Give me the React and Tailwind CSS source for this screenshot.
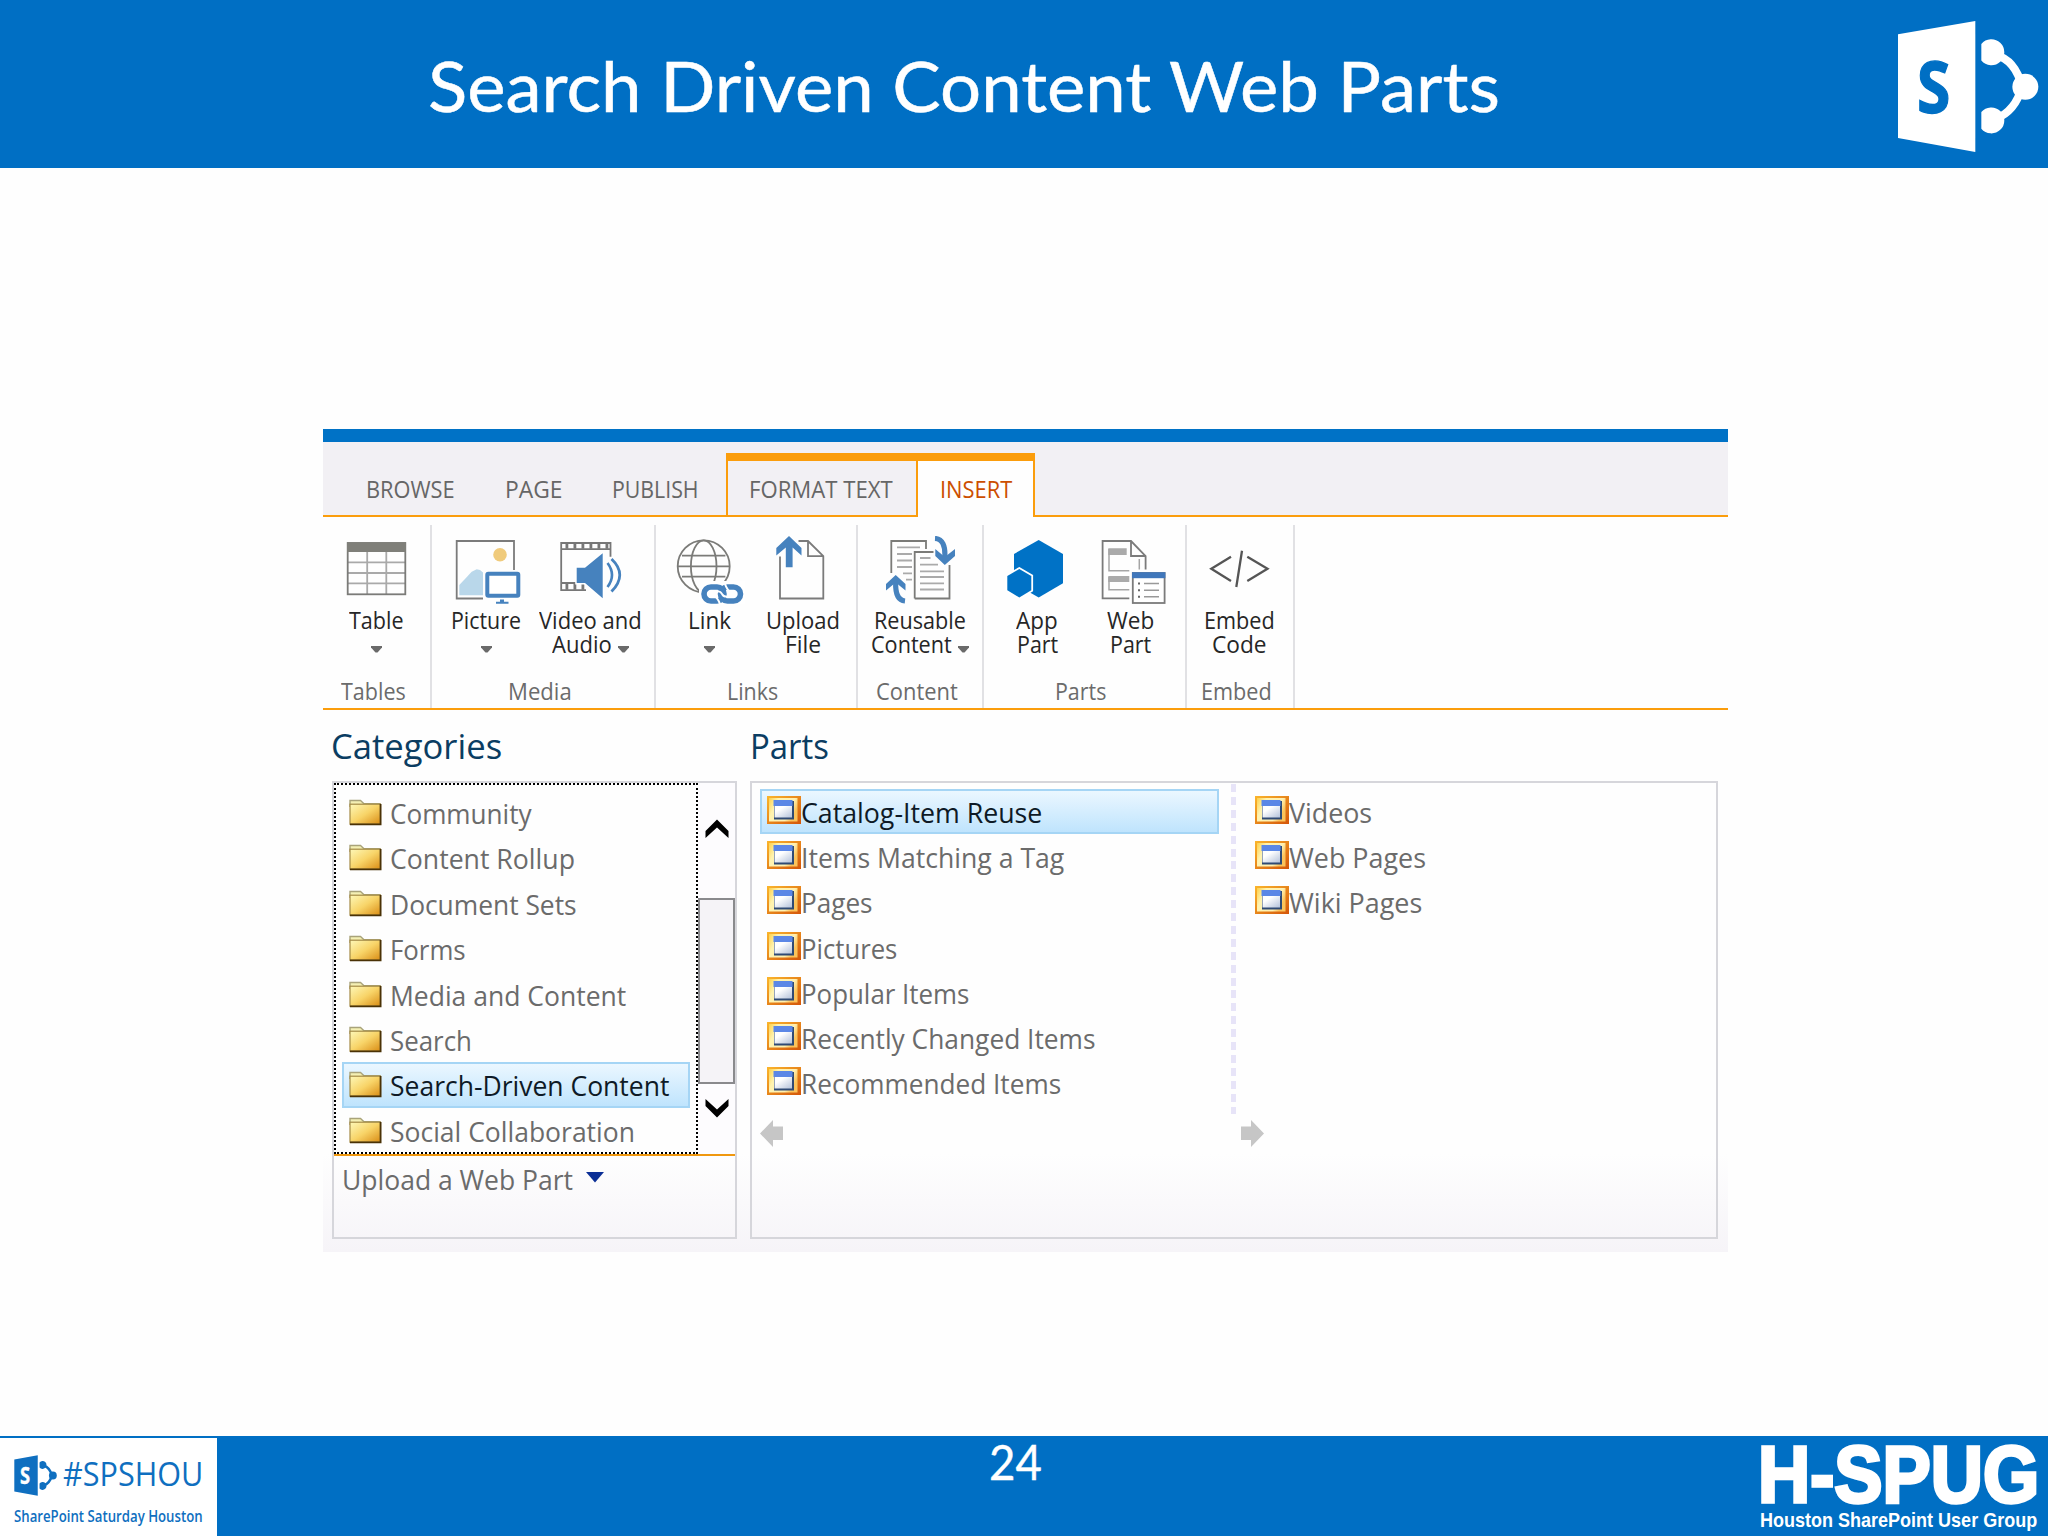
import { useLayoutEffect, useRef, useState } from "react";

// Single line of text squeezed (or stretched) to a fixed width
function Fit({ w, className = "", children }) {
  const ref = useRef(null);
  const [scale, setScale] = useState(1);

  useLayoutEffect(() => {
    setScale(w / ref.current.offsetWidth);
  }, [w, children]);

  return (
    <span className={`block shrink-0 whitespace-nowrap ${className}`} style={{ width: w }}>
      <span ref={ref} className="inline-block origin-left" style={{ transform: `scaleX(${scale})` }}>
        {children}
      </span>
    </span>
  );
}

function SharePointLogo({ className, color, letter }) {
  return (
    <svg viewBox="50 60 426 400" preserveAspectRatio="none" className={className}>
      <polygon points="53,103 285,63 285,457 53,415" fill={color} />
      <text
        x="110"
        y="340"
        fontFamily="Open Sans, sans-serif"
        fontWeight="700"
        fontSize="218"
        textLength="100"
        lengthAdjust="spacingAndGlyphs"
        fill={letter}
        stroke={letter}
        strokeWidth="4"
      >
        S
      </text>
      <path d="M345 165 Q405 180 425 261 Q405 335 345 358" fill="none" stroke={color} strokeWidth="24" />
      <path d="M303 132 A39 39 0 1 1 303 182 Z" fill={color} />
      <path d="M303 337 A39 39 0 1 1 303 387 Z" fill={color} />
      <circle cx="435" cy="261" r="39" fill={color} />
    </svg>
  );
}

function TableIcon() {
  return (
    <svg width="72" height="68" viewBox="0 0 72 68" fill="none">
      <path d="M26.2 16V58M45.3 16V58M7 26.3H64M7 37H64M7 47.3H64" stroke="#a9a9a9" strokeWidth="1.8" />
      <rect x="6.7" y="7" width="57.6" height="51.3" stroke="#7b7b78" strokeWidth="1.8" />
      <rect x="6" y="6.3" width="59" height="9.7" fill="#7f7f79" />
    </svg>
  );
}

function PictureIcon() {
  return (
    <svg width="72" height="68" viewBox="0 0 72 68" fill="none">
      <path d="M64 34V5H6.7V62.5H33" stroke="#7b7b7b" strokeWidth="1.8" />
      <circle cx="50" cy="18.7" r="6.8" fill="#f0cb7c" />
      <path d="M9.3 59.3V49L21.7 35.7L26.7 33.3L30 34L33 36.5V59.3Z" fill="#b9d7ea" />
      <rect x="37.3" y="37.7" width="31" height="22" rx="1" fill="#fff" stroke="#4682be" strokeWidth="4" />
      <path d="M50 63.5H54V65.7H58.5V67.8H46V65.7H50Z" fill="#4682be" />
    </svg>
  );
}

function VideoIcon() {
  return (
    <svg width="72" height="68" viewBox="0 0 72 68" fill="none">
      <path d="M56.5 20.7V7H7.2V54.2H32M7.2 13.2H56.5M7.2 47H24" stroke="#777" strokeWidth="1.8" />
      <path d="M11.5 10.2H56" stroke="#777" strokeWidth="5" strokeDasharray="2.8 5.2" />
      <path d="M11.5 50.7H32" stroke="#777" strokeWidth="6" strokeDasharray="2.8 5.2" />
      <path d="M22.7 31.7H31L48.7 17.3V62.3L31 47H22.7Z" fill="#4682be" stroke="#fff" strokeWidth="3" paintOrder="stroke" />
      <path d="M53.5 27Q62.5 39 53.5 51" stroke="#4682be" strokeWidth="2.6" />
      <path d="M57.5 23Q74 38.5 57.5 55.5" stroke="#4682be" strokeWidth="2.8" />
    </svg>
  );
}

function LinkIcon() {
  return (
    <svg width="72" height="68" viewBox="0 0 72 68" fill="none">
      <g stroke="#7b7b78" strokeWidth="1.8">
        <circle cx="30.7" cy="30.3" r="26" />
        <ellipse cx="30.7" cy="30.3" rx="12.8" ry="26" />
        <path d="M4.7 30.3H56.7M9 19.7H52.4M9 40.7H52.4" />
      </g>
      <path d="M26 50Q28 45 34 45H72V68H26Z" fill="#fff" />
      <rect x="31" y="51" width="20" height="14" rx="7" stroke="#4682be" strokeWidth="5.6" />
      <rect x="47.5" y="51" width="20" height="14" rx="7" stroke="#4682be" strokeWidth="5.6" />
      <path d="M52 48Q54 54 59 58M39.5 58Q45 62 47 68" stroke="#fff" strokeWidth="2" />
      <path d="M42 56Q47 54 49 58T57 60" stroke="#fff" strokeWidth="1.8" />
    </svg>
  );
}

function UploadIcon() {
  return (
    <svg width="72" height="68" viewBox="0 0 72 68" fill="none">
      <path d="M31.5 5H41L56.3 20.2V62.5H13V20.5M41 5V20.2H56.3" stroke="#7b7b7b" strokeWidth="1.8" />
      <path d="M22 0L34.5 12V19.5L25.6 11.5V31.3H18.8V11.5L9.3 19.5V12Z" fill="#4682be" />
    </svg>
  );
}

function ReusableIcon() {
  return (
    <svg width="72" height="68" viewBox="0 0 72 68" fill="none">
      <path d="M7.3 37V5H42V13M30.7 62.5V16H49.5M30.7 62.5H65.5V29" stroke="#7b7b78" strokeWidth="1.8" />
      <path
        d="M13 11.3H36M13 18H28M13 24.5H28M13 31H28M19 37.3H28M22 43.6H28M36 22H46.5M36 28.7H54M36 35.3H60M36 41H60M36 47.3H60M36 53.5H60"
        stroke="#aaa"
        strokeWidth="1.8"
      />
      <path d="M51 2.5Q62 3 60.8 22" stroke="#4682be" strokeWidth="5.2" />
      <path d="M60.8 29L51.3 20V13L60.8 21L71 13V20Z" fill="#4682be" />
      <path d="M21 65Q11 64 11.7 46" stroke="#4682be" strokeWidth="5.2" />
      <path d="M11.7 39L21.5 48V54.5L11.7 46.5L2 54.5V48Z" fill="#4682be" />
    </svg>
  );
}

function AppPartIcon() {
  return (
    <svg width="72" height="68" viewBox="0 0 72 68">
      <polygon points="37.7,4 62,18 62,47.3 37.7,61.5 13,47.3 13,18" fill="#0072c6" />
      <polygon
        points="18.3,33 30.3,40 30.3,54.3 18.3,61.4 6.3,54.3 6.3,40"
        fill="#0072c6"
        stroke="#fff"
        strokeWidth="3.6"
        paintOrder="stroke"
      />
    </svg>
  );
}

function WebPartIcon() {
  return (
    <svg width="72" height="68" viewBox="0 0 72 68" fill="none">
      <path d="M34.3 62.4H7.6V5H36L50.6 20V33.5M36 5V20H50.6" stroke="#7b7b7b" strokeWidth="1.8" />
      <path d="M13.3 12.3H31.7V19H13.3ZM13.3 40H34.3V46H13.3Z" fill="#aaa" />
      <path d="M34.3 34.7H14V13M34.3 53.8H14V41M44.3 23V33.5" stroke="#a5a5a5" strokeWidth="1.5" />
      <rect x="37.8" y="37" width="31.8" height="30" fill="#fff" stroke="#7b7b7b" strokeWidth="1.8" />
      <rect x="37" y="36.2" width="33.4" height="6" fill="#4077bb" />
      <path d="M49 47.5H64M49 54.3H64M49 60.7H64" stroke="#999" strokeWidth="1.5" />
      <path d="M43 47.5H45M43 54.3H45M43 60.7H45" stroke="#666" strokeWidth="2" />
    </svg>
  );
}

function EmbedIcon() {
  return (
    <svg width="72" height="68" viewBox="0 0 72 68" fill="none" stroke="#555" strokeWidth="2.3">
      <path d="M28 20.7L8.3 32.7L28 45M44.3 20.7L64.5 32.7L44.3 45M39 14.7L33.3 51" />
    </svg>
  );
}

function DropArrow({ className = "" }) {
  return (
    <svg width="11" height="7" viewBox="0 0 11 7" className={`shrink-0 ${className}`}>
      <path d="M0 0H11V1.5L6.5 6.5H4.5L0 1.5Z" fill="#6a6a6a" />
    </svg>
  );
}

function FolderIcon() {
  return (
    <svg width="33" height="27" viewBox="0 0 33 27" className="shrink-0">
      <defs>
        <linearGradient id="folder" x1="0" y1="0" x2="1" y2="1">
          <stop offset="0" stopColor="#fdf8b8" />
          <stop offset="0.5" stopColor="#f8d468" />
          <stop offset="1" stopColor="#d98c14" />
        </linearGradient>
      </defs>
      <path d="M1 8V1.5H11.5L15 4.7H31V8" fill="#f5f0b4" stroke="#a9a37a" strokeWidth="1.4" />
      <rect x="1" y="5.2" width="30.4" height="20" fill="url(#folder)" stroke="#a48a45" strokeWidth="1.2" />
      <path d="M1 25.3H31.6V5" fill="none" stroke="#4a3206" strokeWidth="1.8" />
    </svg>
  );
}

function PartIcon() {
  return (
    <svg width="34" height="28" viewBox="0 0 34 28" className="shrink-0">
      <defs>
        <linearGradient id="frame" x1="0" y1="0" x2="1" y2="1">
          <stop offset="0" stopColor="#fbb62c" />
          <stop offset="1" stopColor="#d4560a" />
        </linearGradient>
        <linearGradient id="inner" x1="0" y1="0" x2="1" y2="0.4">
          <stop offset="0" stopColor="#fdd04a" />
          <stop offset="0.3" stopColor="#fff3b0" />
          <stop offset="0.8" stopColor="#fff0b0" />
          <stop offset="1" stopColor="#fbc35a" />
        </linearGradient>
        <linearGradient id="pane" x1="0" y1="0" x2="1" y2="1">
          <stop offset="0.3" stopColor="#ffffff" />
          <stop offset="1" stopColor="#b4c2da" />
        </linearGradient>
      </defs>
      <rect width="34" height="28" fill="url(#frame)" />
      <rect x="2" y="2" width="28.5" height="23.5" fill="url(#inner)" />
      <rect x="7" y="5" width="20" height="18.5" fill="#2f4a74" />
      <rect x="6.5" y="4" width="19" height="6" fill="#5b87e6" />
      <rect x="7.5" y="10" width="17.5" height="11.5" fill="url(#pane)" />
    </svg>
  );
}

// lines: [text, width] pairs, arrow: "below" or "inline" with the last line
function RibbonButton({ className, icon, lines, arrow }) {
  return (
    <div className={`flex flex-col items-center ${className}`}>
      {icon}
      <div className="mt-[5px] flex flex-col items-center text-[23.5px] leading-[23.5px] text-[#262626]">
        {lines.map(([text, w], i) => (
          <div key={i} className="flex">
            <Fit w={w}>{text}</Fit>
            {arrow === "inline" && i === lines.length - 1 && <DropArrow className="mt-[13px] ml-[6px]" />}
          </div>
        ))}
      </div>
      {arrow === "below" && <DropArrow className="mt-[13px]" />}
    </div>
  );
}

function RibbonGroup({ className, label, labelWidth, labelClass, children }) {
  return (
    <div className={`flex shrink-0 flex-col border-r-2 border-[#e1e1e4] pt-[11px] ${className}`}>
      <div className="flex h-[138px]">{children}</div>
      <div className={`h-[34px] text-[23.5px] leading-[34px] text-[#6b6b6b] ${labelClass}`}>
        <Fit w={labelWidth}>{label}</Fit>
      </div>
    </div>
  );
}

const categories = [
  ["Community", 142],
  ["Content Rollup", 185],
  ["Document Sets", 187],
  ["Forms", 76],
  ["Media and Content", 236],
  ["Search", 82],
  ["Search-Driven Content", 279],
  ["Social Collaboration", 245],
];

const parts = [
  ["Catalog-Item Reuse", 241],
  ["Items Matching a Tag", 263],
  ["Pages", 72],
  ["Pictures", 96],
  ["Popular Items", 168],
  ["Recently Changed Items", 295],
  ["Recommended Items", 260],
];

const moreParts = [
  ["Videos", 83],
  ["Web Pages", 137],
  ["Wiki Pages", 133],
];

const selectedRow = "border-[#a5d5f5] bg-linear-to-b from-[#ebf7ff] to-[#bfe4fd] text-[#0e1a26]";
const plainRow = "border-transparent text-[#6b6b6b]";

function Ribbon() {
  return (
    <>
      <div className="h-[13px] bg-[#0072c6]" />
      <div className="flex h-[75px] bg-[#f2f0f4] text-[24px] leading-[73px] text-[#666]">
        <div className="flex w-[403px] border-b-2 border-[#fb9d0c] pt-[10px] pl-[43px]">
          <Fit w={89} className="mr-[50px]">BROWSE</Fit>
          <Fit w={57} className="mr-[50px]">PAGE</Fit>
          <Fit w={87}>PUBLISH</Fit>
        </div>
        <div className="mt-[11px] flex">
          <div className="w-[190px] border-t-8 border-b-2 border-l-2 border-[#fb9d0c] pl-[21px] leading-[55px]">
            <Fit w={144}>FORMAT TEXT</Fit>
          </div>
          <div className="w-[119px] border-x-2 border-t-8 border-[#fb9d0c] bg-[#fefefe] pl-[22px] leading-[55px] text-[#cc4e00]">
            <Fit w={72}>INSERT</Fit>
          </div>
        </div>
        <div className="flex-1 border-b-2 border-[#fb9d0c]" />
      </div>

      <div className="flex h-[193px] border-b-2 border-[#fb9d0c] pt-[8px]">
        <RibbonGroup className="w-[109px]" label="Tables" labelWidth={65} labelClass="pl-[18px]">
          <RibbonButton className="w-[107px]" icon={<TableIcon />} lines={[["Table", 55]]} arrow="below" />
        </RibbonGroup>
        <RibbonGroup className="w-[224px]" label="Media" labelWidth={64} labelClass="pl-[76px]">
          <RibbonButton className="w-[108px]" icon={<PictureIcon />} lines={[["Picture", 70]]} arrow="below" />
          <RibbonButton
            className="w-[100px]"
            icon={<VideoIcon />}
            lines={[["Video and", 103], ["Audio", 60]]}
            arrow="inline"
          />
        </RibbonGroup>
        <RibbonGroup className="w-[202px]" label="Links" labelWidth={51} labelClass="pl-[71px]">
          <RibbonButton className="w-[106px]" icon={<LinkIcon />} lines={[["Link", 43]]} arrow="below" />
          <RibbonButton className="w-[82px]" icon={<UploadIcon />} lines={[["Upload", 74], ["File", 36]]} />
        </RibbonGroup>
        <RibbonGroup className="w-[126px]" label="Content" labelWidth={82} labelClass="pl-[18px]">
          <RibbonButton
            className="w-[124px]"
            icon={<ReusableIcon />}
            lines={[["Reusable", 92], ["Content", 81]]}
            arrow="inline"
          />
        </RibbonGroup>
        <RibbonGroup className="w-[203px]" label="Parts" labelWidth={51} labelClass="pl-[71px]">
          <RibbonButton className="w-[106px]" icon={<AppPartIcon />} lines={[["App", 42], ["Part", 41]]} />
          <RibbonButton className="w-[81px]" icon={<WebPartIcon />} lines={[["Web", 47], ["Part", 41]]} />
        </RibbonGroup>
        <RibbonGroup className="w-[108px]" label="Embed" labelWidth={71} labelClass="pl-[14px]">
          <RibbonButton className="w-[104px]" icon={<EmbedIcon />} lines={[["Embed", 71], ["Code", 55]]} />
        </RibbonGroup>
      </div>
    </>
  );
}

function Categories() {
  return (
    <div className="w-[405px]">
      <h2 className="h-[71px] text-[35px] leading-[72px] text-[#0b3d62]">
        <Fit w={171} className="-ml-px">Categories</Fit>
      </h2>
      <div className="h-[458px] border-2 border-[#d6d6db]">
        <div className="flex h-[373px] border-b-2 border-[#f0980f]">
          <div className="h-[371px] w-[364px] border-2 border-dotted border-black pt-[5px] pl-[6px] text-[26.5px]">
            {categories.map(([name, w]) => (
              <div
                key={name}
                className={`flex h-[45.4px] w-[348px] border-2 pl-[5px] ${
                  name === "Search-Driven Content" ? selectedRow : plainRow
                }`}
              >
                <div className="pt-[7px]">
                  <FolderIcon />
                </div>
                <Fit w={w} className="ml-[8px] leading-[44px]">{name}</Fit>
              </div>
            ))}
          </div>
          <div className="flex w-[37px] flex-col items-center bg-[#fdfcfe]">
            <svg width="24" height="20" viewBox="0 0 24 20" className="mt-[36px] shrink-0">
              <path d="M0.5 19V12L12 0.5L23.5 12V19L12 8.5Z" fill="#000" />
            </svg>
            <div className="mt-[59px] h-[186px] w-[37px] shrink-0 border-2 border-[#8a8a8d] bg-[#f5f3f7]" />
            <svg width="24" height="20" viewBox="0 0 24 20" className="mt-[14px] shrink-0">
              <path d="M0.5 1V8L12 19.5L23.5 8V1L12 11.5Z" fill="#000" />
            </svg>
          </div>
        </div>
        <div className="flex pl-[8px] text-[26.5px] leading-[49px] text-[#6b6b6b]">
          <Fit w={231}>Upload a Web Part</Fit>
          <svg width="18" height="11" viewBox="0 0 18 11" className="mt-[16px] ml-[13px]">
            <path d="M0 0H18L9 10.5Z" fill="#0b2f96" />
          </svg>
        </div>
      </div>
    </div>
  );
}

function PartRow({ name, w, selected, className = "" }) {
  return (
    <div className={`flex h-[45.2px] border-2 pl-[5px] text-[26.5px] ${selected ? selectedRow : plainRow} ${className}`}>
      <div className="pt-[5px]">
        <PartIcon />
      </div>
      <Fit w={w} className="leading-[44px]">{name}</Fit>
    </div>
  );
}

function Parts() {
  return (
    <div className="ml-[13px] w-[968px]">
      <h2 className="h-[71px] text-[35px] leading-[72px] text-[#0b3d62]">
        <Fit w={79}>Parts</Fit>
      </h2>
      <div className="h-[458px] border-2 border-[#d6d6db]">
        <div className="flex h-[331px] pl-[8px]">
          <div className="w-[459px] pt-[6px]">
            {parts.map(([name, w], i) => (
              <PartRow key={name} name={name} w={w} selected={i === 0} />
            ))}
          </div>
          <div className="mt-px ml-[12px] w-[5px] bg-[repeating-linear-gradient(to_bottom,#e7e4f8_0_8px,transparent_8px_12.9px)]" />
          <div className="ml-[12px] w-[300px] pt-[6px]">
            {moreParts.map(([name, w]) => (
              <PartRow key={name} name={name} w={w} />
            ))}
          </div>
        </div>
        <div className="flex pt-[6px] pl-[8px]">
          <svg width="24" height="27" viewBox="0 0 24 27">
            <path d="M0 13.5L13 0V6.5H23V20H13V27Z" fill="#c6c6c6" />
          </svg>
          <svg width="24" height="27" viewBox="0 0 24 27" className="ml-[456px]">
            <path d="M24 13.5L11 0V6.5H1V20H11V27Z" fill="#c6c6c6" />
          </svg>
        </div>
      </div>
    </div>
  );
}

export default function App() {
  return (
    <div className="flex h-[1536px] w-[2048px] flex-col overflow-hidden bg-[#fefefe] font-['Open_Sans',sans-serif]">
      {/* Slide title */}
      <header className="flex h-[168px] shrink-0 bg-[#006fc4] pl-[428px]">
        <h1 className="font-['Lato',sans-serif] text-[70px] leading-[170px] text-white [-webkit-text-stroke:0.5px_white]">
          <Fit w={1072}>Search Driven Content Web Parts</Fit>
        </h1>
        <SharePointLogo className="mt-[20px] ml-[397px] h-[133px] w-[142px]" color="#ffffff" letter="#006fc4" />
      </header>

      {/* SharePoint ribbon */}
      <main className="mt-[261px] ml-[323px] h-[823px] w-[1405px] bg-linear-to-b from-[#fefefe] from-88% to-[#f6f4f8]">
        <Ribbon />
        <div className="flex pl-[9px]">
          <Categories />
          <Parts />
        </div>
      </main>

      <footer className="mt-auto flex h-[100px] shrink-0 bg-[#006fc4]">
        <div className="mt-[2px] w-[217px] bg-white pl-[14px] text-[#0f6fc0]">
          <div className="flex h-[61px] pt-[17px]">
            <SharePointLogo className="h-[41px] w-[43px]" color="#0f6fc0" letter="#ffffff" />
            <Fit w={140} className="-mt-[17px] ml-[6px] text-[33px] leading-[72px] font-medium">#SPSHOU</Fit>
          </div>
          <Fit w={189} className="text-[16px] leading-[34px] font-semibold">SharePoint Saturday Houston</Fit>
        </div>
        <div className="ml-[772px] font-['Lato',sans-serif] text-[49px] leading-[51px] text-white [-webkit-text-stroke:0.4px_white]">
          <Fit w={53}>24</Fit>
        </div>
        <div className="ml-[716px] font-['Liberation_Sans',sans-serif] font-bold text-white">
          <Fit w={281} className="h-[69px] text-[80px] leading-[77px] [-webkit-text-stroke:3.5px_white]">H-SPUG</Fit>
          <Fit w={277} className="ml-[2px] text-[21px] leading-[29px]">Houston SharePoint User Group</Fit>
        </div>
      </footer>
    </div>
  );
}
